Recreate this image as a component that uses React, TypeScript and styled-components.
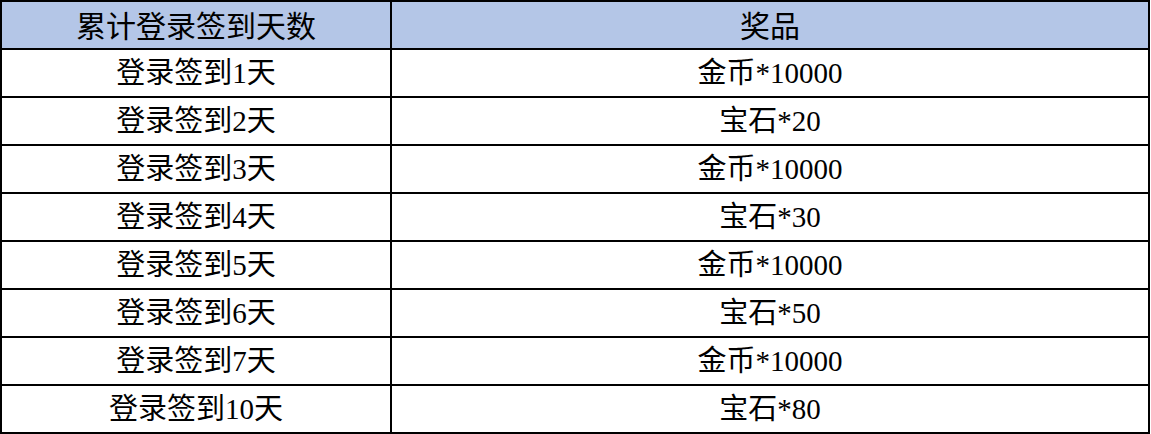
import React from "react";
import styled, { createGlobalStyle } from "styled-components";

const Global = createGlobalStyle`
  html, body { margin: 0; padding: 0; background: #ffffff; }
`;

const Table = styled.table`
  width: 1150px;
  border-collapse: collapse;
  table-layout: fixed;
  font-family: "Liberation Serif", "Noto Sans CJK SC", serif;
  color: #000;
`;

const HeadCell = styled.th<{ $w?: number }>`
  width: ${(p) => (p.$w ? `${p.$w}px` : "auto")};
  height: 48px;
  padding: 3px 0 0;
  box-sizing: border-box;
  border: 2px solid #000;
  background: #b4c6e7;
  font-weight: normal;
  font-size: 30px;
  text-align: center;
  vertical-align: middle;
  line-height: 1;
`;

const Cell = styled.td`
  height: 48px;
  padding: 1px 0 0;
  box-sizing: border-box;
  border: 2px solid #000;
  font-size: 29px;
  text-align: center;
  vertical-align: middle;
  line-height: 1;
`;

const rows: [string, string][] = [
  ["登录签到1天", "金币*10000"],
  ["登录签到2天", "宝石*20"],
  ["登录签到3天", "金币*10000"],
  ["登录签到4天", "宝石*30"],
  ["登录签到5天", "金币*10000"],
  ["登录签到6天", "宝石*50"],
  ["登录签到7天", "金币*10000"],
  ["登录签到10天", "宝石*80"],
];

export default function App() {
  return (
    <>
      <Global />
      <Table>
        <thead>
          <tr>
            <HeadCell $w={390}>累计登录签到天数</HeadCell>
            <HeadCell>奖品</HeadCell>
          </tr>
        </thead>
        <tbody>
          {rows.map(([a, b]) => (
            <tr key={a}>
              <Cell>{a}</Cell>
              <Cell>{b}</Cell>
            </tr>
          ))}
        </tbody>
      </Table>
    </>
  );
}
